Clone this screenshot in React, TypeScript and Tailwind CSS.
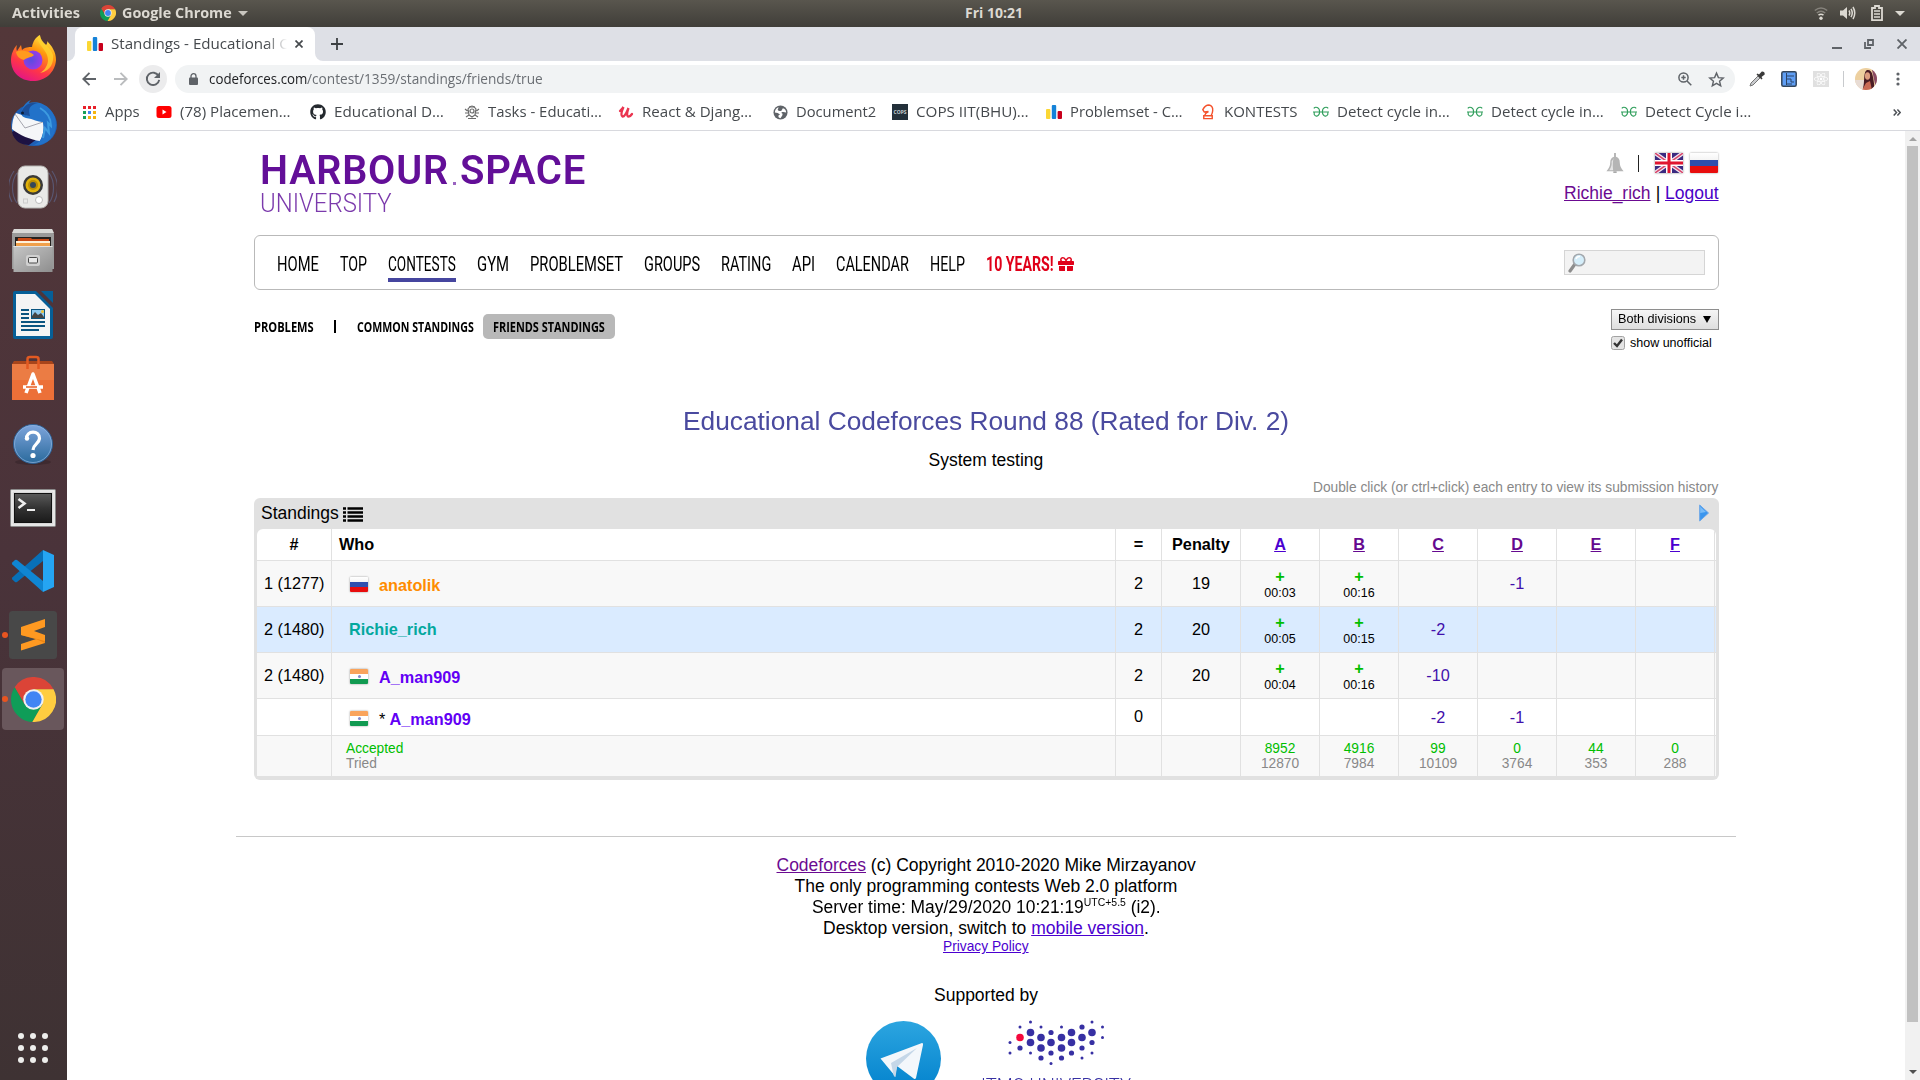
import React, { useLayoutEffect, useRef } from "react";
import { FaGithub, FaGift, FaReact } from "react-icons/fa";

/* Single line of text stretched horizontally to fill the width of its box. */
function Fit({ className = "", children }: { className?: string; children: React.ReactNode }) {
  const outer = useRef<HTMLSpanElement>(null);
  const inner = useRef<HTMLSpanElement>(null);
  useLayoutEffect(() => {
    if (!outer.current || !inner.current) return;
    const k = outer.current.clientWidth / inner.current.offsetWidth;
    inner.current.style.transform = `scaleX(${k})`;
  }, []);
  return (
    <span ref={outer} className={`block shrink-0 whitespace-nowrap text-left ${className}`}>
      <span ref={inner} className="inline-block origin-left align-top">
        {children}
      </span>
    </span>
  );
}

/* ---------- Icons ---------- */

function ChromeIcon({ className }: { className: string }) {
  return (
    <svg viewBox="2 2 44 44" className={className}>
      <path d="M5.54 12.03A22 22 0 0 1 43.6 14H24L15.34 29Z" fill="#db4437" />
      <path d="M22.86 45.97A22 22 0 0 1 5.54 12.03L15.34 29L32.66 29Z" fill="#0f9d58" />
      <path d="M43.6 14A22 22 0 0 1 22.86 45.97L32.66 29L24 14Z" fill="#ffcd40" />
      <circle cx="24" cy="24" r="10" fill="#f1f1f1" />
      <circle cx="24" cy="24" r="8" fill="#4285f4" />
    </svg>
  );
}

function Bars() {
  return (
    <svg viewBox="0 0 16 14" className="h-3.5 w-4">
      <rect x="0" y="4" width="4.4" height="10" rx="1" fill="#fbd734" />
      <rect x="5.8" y="0" width="4.4" height="14" rx="1" fill="#1582d8" />
      <rect x="11.6" y="6" width="4.4" height="8" rx="1" fill="#c8001c" />
    </svg>
  );
}

function Gfg() {
  return (
    <svg viewBox="0 0 16 12" className="h-3 w-4" fill="none" stroke="#2f9e5b" strokeWidth="1.1">
      <path d="M.8 2.4C2.3.3 6.6.9 6.6 5.8S2.4 11 1.2 8.6V6.3M0 6H16" />
      <path d="M15.2 2.4C13.7.3 9.4.9 9.4 5.8S13.6 11 14.8 8.6V6.3" />
    </svg>
  );
}

function Firefox() {
  return (
    <svg viewBox="0 0 48 48" className="size-12">
      <defs>
        <linearGradient id="ffA" x1=".8" y1="0" x2=".3" y2="1">
          <stop offset="0" stopColor="#fff44f" />
          <stop offset=".35" stopColor="#ff980e" />
          <stop offset=".7" stopColor="#ff3647" />
          <stop offset="1" stopColor="#e31587" />
        </linearGradient>
        <radialGradient id="ffB" cx=".4" cy=".5" r=".7">
          <stop offset="0" stopColor="#5a4be0" />
          <stop offset="1" stopColor="#a838e8" />
        </radialGradient>
      </defs>
      <path d="M8 10C7 13 7.500 15 8 16L12 10L13 15C16 12 20 12 23 12C24 6 27 2 31 0C31 4 33 7 37 10C39 8 38 6 38 6C43 11 47 17 47 25C46 38 36 46 24 46C11 46 2 37 2 25C2 20 4 14 8 10Z" fill="url(#ffA)" />
      <path d="M29 1C27 10 40 15 39 26C38 33 34 36 31 38C42 36 45 27 44 20C42 12 33 9 31 1Z" fill="#ffd22e" opacity=".8" />
      <circle cx="24" cy="25" r="9.500" fill="url(#ffB)" />
      <path d="M7 17C12 14 18 16 23 18.500L25 20C22 23 18 22 15 25C11 24 8 22 7 17Z" fill="#ff9a1e" />
    </svg>
  );
}

function Thunderbird() {
  return (
    <svg viewBox="0 0 48 48" className="size-12">
      <ellipse cx="25" cy="26" rx="23" ry="21" fill="#1f5fb4" />
      <path d="M3 33C5 42 12 46 20 46L28 40L8 30Z" fill="#1d1242" />
      <path d="M7 14L34 23C36 30 33 38 31 42C22 41 10 36 3 30C3 24 4 18 7 14Z" fill="#f5f6f8" />
      <path d="M6 15L16 29L34 23" fill="none" stroke="#a5a5ae" strokeWidth="1" />
      <path d="M12 15C13 6 19 2 22 1C20 3 20 4 20 4C34 0 48 12 47 27C46 38 38 47 25 46C34 42 36 33 34 23C28 23 25 20 17 19C14 18 13 17 12 15Z" fill="#2272c9" />
      <path d="M12 14C15 6 20 3 29 4C20 6 19 10 21 17C17 16 15 17 12 14Z" fill="#1c4f99" />
      <path d="M31 9C38 13 42 20 42 27L39 24L40 34L36 29L34 39" fill="none" stroke="#3d9be0" strokeWidth="2" />
      <circle cx="13.500" cy="14" r="1.500" fill="#0c1e3a" />
    </svg>
  );
}

function Rhythmbox() {
  return (
    <svg viewBox="0 0 48 48" className="size-12">
      <g fill="none" stroke="#5c6488" strokeWidth="1.200" opacity=".7">
        <path d="M8 10C2 18 2 32 8 40M5 8C-2 18-2 30 3 39M40 10C46 18 46 32 40 40M43 8C50 18 50 30 45 39" />
      </g>
      <rect x="9" y="3" width="30" height="42" rx="7" fill="#e9e9e7" stroke="#b5b5b2" />
      <circle cx="24" cy="22" r="10" fill="#3a3a38" />
      <circle cx="24" cy="22" r="7.500" fill="#e0b10a" />
      <circle cx="24" cy="22" r="5" fill="#b98d05" />
      <circle cx="24" cy="22" r="3" fill="#33475a" />
      <circle cx="30" cy="37" r="3.500" fill="#fff" stroke="#bbb" />
      <rect x="14.500" y="36" width="4" height="4" fill="none" stroke="#ccc" />
    </svg>
  );
}

function Files() {
  return (
    <svg viewBox="0 0 48 48" className="size-12">
      <defs>
        <linearGradient id="flA" x1="0" y1="0" x2="1" y2="1">
          <stop offset="0" stopColor="#c6c6c6" />
          <stop offset="1" stopColor="#8e8e8e" />
        </linearGradient>
      </defs>
      <path d="M5 2H43L45 7V42H3V7Z" fill="#9a9a9a" />
      <path d="M5 2H43L45 6H3Z" fill="#d9d9d7" />
      <rect x="6" y="10" width="36" height="12" fill="#24211f" />
      <path d="M9 11H22L23 12H40V20H8Z" fill="#c94a16" />
      <rect x="7" y="14" width="34" height="2" fill="#fff1da" />
      <rect x="7" y="16" width="34" height="4" fill="#f0a04b" />
      <rect x="4.500" y="19" width="39" height="26" fill="url(#flA)" />
      <path d="M4.500 19.500H43.500" stroke="#e2e2e2" />
      <rect x="17" y="28" width="14" height="11" rx="2" fill="#d0d0d0" />
      <rect x="19.500" y="30.500" width="9" height="5.500" rx="1" fill="#e8e8e8" stroke="#4a4a4a" />
    </svg>
  );
}

function Writer() {
  return (
    <svg viewBox="0 0 48 48" className="size-12">
      <path d="M6 0H27L44 17V46Q44 48 42 48H6Q4 48 4 46V2Q4 0 6 0Z" fill="#065f97" />
      <path d="M32 0H44V12Z" fill="#065f97" />
      <path d="M7 3H26L41 18V45H7Z" fill="#f4f4f4" />
      <path d="M12 19H20M12 23H20M12 27H20M12 31H36M12 35H36M12 39H30" stroke="#0a5480" strokeWidth="2" />
      <rect x="22.500" y="18.500" width="13" height="9" fill="#8ec9f0" stroke="#0a5480" />
      <path d="M23 27V25L26 21L29 24L32 22L35 26V27Z" fill="#444" />
      <circle cx="33.500" cy="20.500" r="1.500" fill="#f2c230" />
    </svg>
  );
}

function Software() {
  return (
    <svg viewBox="0 0 48 48" className="size-12">
      <path d="M3 9L5 6H43L45 9V16H3Z" fill="#a7451b" />
      <rect x="3" y="9" width="42" height="36" fill="#ec7038" />
      <rect x="3" y="9" width="42" height="16" fill="#ea8750" opacity=".5" />
      <path d="M18.500 14V4Q18.500 2 21 2H27Q29.500 2 29.500 4V14" fill="none" stroke="#e25a22" strokeWidth="2.500" />
      <path d="M17 38L24 19L31 38M14 32H34" fill="none" stroke="#fff" strokeWidth="3.500" strokeLinejoin="round" />
      <path d="M17 32H28" stroke="#e95b1e" strokeWidth="1.500" />
    </svg>
  );
}

function Help() {
  return (
    <svg viewBox="0 0 48 48" className="size-12">
      <defs>
        <linearGradient id="hpA" x1="0" y1="0" x2="0" y2="1">
          <stop offset="0" stopColor="#7ea5dc" />
          <stop offset="1" stopColor="#2a6a9c" />
        </linearGradient>
      </defs>
      <ellipse cx="24" cy="43" rx="18" ry="3" fill="#352529" opacity=".6" />
      <circle cx="24" cy="25" r="19.500" fill="url(#hpA)" stroke="#2e5f92" />
      <circle cx="24" cy="25" r="18.500" fill="none" stroke="#8fb4e0" opacity=".7" />
      <path d="M17.500 20C17 11 31 11 30.500 19.500C30 25 24.500 25 24 31" fill="none" stroke="#fff" strokeWidth="3.200" />
      <circle cx="18" cy="19.500" r="2.200" fill="#fff" />
      <circle cx="24" cy="36.500" r="2.600" fill="#fff" />
    </svg>
  );
}

function Terminal() {
  return (
    <svg viewBox="0 0 48 48" className="size-12">
      <defs>
        <linearGradient id="tmA" x1="0" y1="0" x2="0" y2="1">
          <stop offset="0" stopColor="#5a5a5a" />
          <stop offset=".5" stopColor="#333" />
          <stop offset="1" stopColor="#1a1a1a" />
        </linearGradient>
      </defs>
      <rect x="1.500" y="6.500" width="45" height="37" rx="1" fill="#d8d8d8" stroke="#8a8a8a" />
      <rect x="3" y="8" width="42" height="34" fill="none" stroke="#f4f4f4" />
      <rect x="5.500" y="10.500" width="37" height="29" fill="url(#tmA)" stroke="#111" />
      <path d="M9.500 16L15.500 20.500L9.500 25" fill="none" stroke="#eee" strokeWidth="2.600" />
      <path d="M18 27H26" stroke="#eee" strokeWidth="2" />
    </svg>
  );
}

function VsCode() {
  return (
    <svg viewBox="0 0 48 48" className="size-12">
      <path d="M34 3V14L8 35Q7 35.500 6 35L3.300 32.500Q2.500 31.500 3.300 30.500Z" fill="#0870b8" />
      <path d="M34 45V34L8 13Q7 12.500 6 13L3.300 15.500Q2.500 16.500 3.300 17.500Z" fill="#0f86d3" />
      <path d="M34 3L45 8V40L34 45Z" fill="#25a5f3" />
    </svg>
  );
}

function Sublime() {
  return (
    <svg viewBox="0 0 48 48" className="size-12">
      <rect width="48" height="48" rx="3.500" fill="#484848" />
      <path d="M12 33L36 25V32L12 39.500Z" fill="#ff9921" />
      <path d="M12 24L20 21L36 26V32L28 28.500L12 24Z" fill="#ea8413" />
      <path d="M12 16L36 8V16L25 20L36 24V30L12 24Z" fill="#ff9921" />
    </svg>
  );
}

function Magnifier() {
  return (
    <svg viewBox="0 0 18 20" className="h-5 w-[18px]">
      <path d="M2 18L7 11" stroke="#8d8d8d" strokeWidth="3.200" strokeLinecap="round" />
      <circle cx="11" cy="7" r="5.800" fill="#d5eefa" stroke="#a3a8ad" strokeWidth="1.600" />
      <path d="M8 6Q9 3 12 3.500" stroke="#fff" strokeWidth="1.500" fill="none" />
    </svg>
  );
}

function RuFlag({ className }: { className: string }) {
  return (
    <span className={`flex flex-col overflow-hidden rounded-[1px] shadow-[0_0_2px_rgba(0,0,0,.45)] ${className}`}>
      <span className="flex-1 bg-gradient-to-b from-white to-[#f4f4f4]" />
      <span className="flex-1 bg-[#2f4fae]" />
      <span className="flex-1 bg-[#e80d0d]" />
    </span>
  );
}

function InFlag() {
  return (
    <span className="-mt-0.5 flex h-[15px] w-[18px] flex-col overflow-hidden rounded-[1px] shadow-[0_0_2px_rgba(0,0,0,.45)]">
      <span className="flex-1 bg-[#f9a45c]" />
      <span className="flex flex-1 items-center justify-center bg-white">
        <span className="size-[3px] rounded-full bg-[#8288c8]" />
      </span>
      <span className="flex-1 bg-[#119a51]" />
    </span>
  );
}

function UkFlag() {
  return (
    <svg viewBox="0 0 28 20" className="h-5 w-7 shadow-[0_0_2px_rgba(0,0,0,.45)]">
      <rect width="28" height="20" fill="#3b2a80" />
      <path d="M0 0L28 20M28 0L0 20" stroke="#f3e9f2" strokeWidth="4" />
      <path d="M0 0L28 20M28 0L0 20" stroke="#d8486c" strokeWidth="1.500" />
      <path d="M14 0V20M0 10H28" stroke="#fff" strokeWidth="6" />
      <path d="M14 0V20M0 10H28" stroke="#e0152f" strokeWidth="3" />
    </svg>
  );
}

/* ---------- Desktop shell ---------- */

function TopBar() {
  return (
    <div className="flex h-[27px] shrink-0 items-center bg-gradient-to-b from-[#59564e] to-[#403e39] pb-px font-['Open_Sans',sans-serif] text-sm font-bold text-[#dcd9d2]">
      <Fit className="ml-3 w-[68px]">Activities</Fit>
      <ChromeIcon className="ml-5 size-4" />
      <Fit className="ml-1.5 w-[110px]">Google Chrome</Fit>
      <svg viewBox="0 0 10 5" className="ml-1.5 h-[5px] w-2.5">
        <path d="M0 0H10L5 5Z" fill="#c9c6bf" />
      </svg>
      <Fit className="ml-[717px] w-[58px]">Fri 10:21</Fit>
      <div className="ml-auto flex items-center pr-[15px]">
        <svg viewBox="0 0 14 13" className="mr-3 h-[13px] w-3.5" fill="none" strokeWidth="1.600">
          <path d="M.8 3.500Q7-1.500 13.200 3.500M2.800 6Q7 2.500 11.200 6" stroke="#86837c" />
          <path d="M4.500 8.200Q7 6.300 9.500 8.200" stroke="#dcd9d2" />
          <circle cx="7" cy="11.300" r="1.700" fill="#dcd9d2" />
        </svg>
        <svg viewBox="0 0 16 14" className="mr-[15px] h-3.5 w-4" fill="none" stroke="#dcd9d2" strokeWidth="1.500">
          <path d="M0 4.500H3L7 1V13L3 9.500H0Z" fill="#dcd9d2" stroke="none" />
          <path d="M9 4.500Q10.500 7 9 9.500M11 2.800Q13.500 7 11 11.200M13 1Q16.500 7 13 13" />
        </svg>
        <svg viewBox="0 0 12 16" className="mr-3 h-4 w-3">
          <path d="M4 1H8V3H11V15.200H1V3H4Z" fill="none" stroke="#dcd9d2" strokeWidth="1.800" />
          <path d="M3 6H9M3 9H9M3 12H9" stroke="#dcd9d2" strokeWidth="1.600" />
        </svg>
        <svg viewBox="0 0 10 5" className="h-[5px] w-2.5">
          <path d="M0 0H10L5 5Z" fill="#dcd9d2" />
        </svg>
      </div>
    </div>
  );
}

function Dock() {
  const icons = [<Firefox />, <Thunderbird />, <Rhythmbox />, <Files />, <Writer />, <Software />, <Help />, <Terminal />, <VsCode />];
  return (
    <div className="flex w-[67px] shrink-0 flex-col bg-gradient-to-b from-[#533739] via-[#4a333a] to-[#3e3233]">
      {icons.map((icon, i) => (
        <div key={i} className="flex h-16 w-[66px] items-center justify-center">
          {icon}
        </div>
      ))}
      <div className="flex h-16 items-center">
        <span className="ml-0.5 size-1.5 rounded-full bg-[#e95420]" />
        <span className="ml-px">
          <Sublime />
        </span>
      </div>
      <div className="ml-0.5 mt-px flex h-[62px] w-[62px] items-center rounded bg-[#69575c]">
        <span className="size-1.5 rounded-full bg-[#e95420]" />
        <ChromeIcon className="ml-[3px] size-[45px]" />
      </div>
      <div className="mb-[17px] ml-[18px] mt-auto grid w-[30px] grid-cols-3 gap-1.5">
        {Array.from({ length: 9 }, (_, i) => (
          <span key={i} className="size-1.5 rounded-full bg-[#eeeeec]" />
        ))}
      </div>
    </div>
  );
}

/* ---------- Browser chrome ---------- */

function TabStrip() {
  return (
    <div className="flex h-[34px] items-center bg-[#dee0e6]">
      <div className="flex w-2 items-end self-stretch bg-white">
        <span className="h-full w-2 rounded-br-lg bg-[#dee0e6]" />
      </div>
      <div className="flex h-full w-60 items-center rounded-t-lg bg-white pl-3">
        <Bars />
        <div className="ml-2 w-[176px] overflow-hidden [mask-image:linear-gradient(to_right,black_88%,transparent)]">
          <Fit className="w-[187px]">Standings - Educational Co</Fit>
        </div>
        <svg viewBox="0 0 8 8" className="ml-2 size-2" stroke="#45494d" strokeWidth="1.700">
          <path d="M.5.5L7.500 7.500M7.500.5L.5 7.500" />
        </svg>
      </div>
      <div className="flex w-2 self-stretch bg-white">
        <span className="h-full w-2 rounded-bl-lg bg-[#dee0e6]" />
      </div>
      <svg viewBox="0 0 12 12" className="ml-2 size-3" stroke="#3c4043" strokeWidth="1.800">
        <path d="M6 0V12M0 6H12" />
      </svg>
      <div className="ml-auto flex items-center pr-[13px]">
        <span className="mr-[22px] mt-2 h-0.5 w-2.5 bg-[#5f6368]" />
        <svg viewBox="0 0 10 10" className="mr-[23px] size-2.5" fill="none" stroke="#5f6368" strokeWidth="1.800">
          <path d="M4 1H9V6H4ZM1 3V9H7" />
        </svg>
        <svg viewBox="0 0 10 10" className="size-2.5" stroke="#5f6368" strokeWidth="1.900">
          <path d="M.5.5L9.500 9.500M9.500.5L.5 9.500" />
        </svg>
      </div>
    </div>
  );
}

function Toolbar() {
  return (
    <div className="flex h-9 items-center bg-white">
      <svg viewBox="0 0 14 14" className="ml-[15px] size-3.5" fill="none" stroke="#5f6368" strokeWidth="1.900">
        <path d="M14 7H1.500M7.500 .8L1.300 7L7.500 13.200" />
      </svg>
      <svg viewBox="0 0 14 14" className="ml-[18px] size-3.5" fill="none" stroke="#babcbe" strokeWidth="1.900">
        <path d="M0 7H12.500M6.500 .8L12.700 7L6.500 13.200" />
      </svg>
      <span className="ml-[11px] flex size-7 items-center justify-center rounded-full bg-[#ececed]">
        <svg viewBox="0 0 16 16" className="size-4" fill="none" stroke="#5f6368" strokeWidth="1.900">
          <path d="M13.600 5A6.200 6.200 0 1 0 14.200 8.800" />
          <path d="M15 1V7H9Z" fill="#5f6368" stroke="none" />
        </svg>
      </span>
      <div className="ml-2 flex h-7 w-[1560px] items-center rounded-full bg-[#f1f3f4] pl-[14px] pr-[10px]">
        <svg viewBox="0 0 9 12" className="h-3 w-[9px]">
          <rect x="0" y="4.500" width="9" height="7.500" rx="1" fill="#5f6368" />
          <path d="M2 5V3.200A2.500 2.500 0 0 1 7 3.200V5" fill="none" stroke="#5f6368" strokeWidth="1.300" />
        </svg>
        <Fit className="ml-[11px] w-[98px] text-[#202124]">codeforces.com</Fit>
        <Fit className="w-[236px] text-[#6a6e73]">/contest/1359/standings/friends/true</Fit>
        <svg viewBox="0 0 14 14" className="ml-auto size-3.5" fill="none" stroke="#5f6368" strokeWidth="1.500">
          <circle cx="5.500" cy="5.500" r="4.600" />
          <path d="M9 9L13.300 13.300M3.300 5.500H7.700M5.500 3.300V7.700" />
        </svg>
        <svg viewBox="0 0 24 24" className="ml-[16px] size-[17px]" fill="none" stroke="#5f6368" strokeWidth="2">
          <path d="M12 3L14.700 9.300L21.500 9.900L16.300 14.400L17.900 21L12 17.500L6.100 21L7.700 14.400L2.500 9.900L9.300 9.300Z" />
        </svg>
      </div>
      <svg viewBox="0 0 16 16" className="ml-[14px] size-4">
        <path d="M1 15L2 12L9 5L11 7L4 14Z" fill="#c9cbce" stroke="#777" />
        <path d="M7.500 3.500L12.500 8.500L13.500 7.500L12.500 6L15.700 3.500Q16 .3 12.800 .5L10 3.500L8.500 2.500Z" fill="#3a3a3a" />
      </svg>
      <svg viewBox="0 0 16 16" className="ml-[16px] size-4">
        <rect x=".8" y=".8" width="14.400" height="14.400" rx="1.500" fill="#5f9ef4" stroke="#33465c" strokeWidth="1.500" />
        <path d="M5.500 2V14M5.500 5H13M5.500 8H10V11H13M5.500 13H11" fill="none" stroke="#2c4568" strokeWidth="1" />
      </svg>
      <span className="ml-4 flex size-4 items-center justify-center bg-[#e0e0e0] text-white">
        <FaReact className="size-3.5" />
      </span>
      <span className="ml-3.5 h-4 w-px bg-[#c8cacd]" />
      <svg viewBox="0 0 22 22" className="ml-[11px] size-[22px]">
        <defs>
          <clipPath id="av">
            <circle cx="11" cy="11" r="11" />
          </clipPath>
        </defs>
        <g clipPath="url(#av)">
          <rect width="22" height="22" fill="#edd0a0" />
          <rect y="12" width="9" height="10" fill="#e8dcd5" />
          <path d="M8 20C10 14 8 4 12 2C18 1 18 9 20 22Z" fill="#4a1c25" />
          <ellipse cx="12.500" cy="8" rx="2.600" ry="3.800" fill="#dd9d80" />
          <path d="M7 22L11 15L15 13L17 22Z" fill="#c96a55" />
          <path d="M17 2L22 0V22L20 16Z" fill="#8b4a65" />
        </g>
      </svg>
      <svg viewBox="0 0 4 14" className="ml-[19px] h-3.5 w-1" fill="#5f6368">
        <circle cx="2" cy="2" r="1.600" />
        <circle cx="2" cy="7" r="1.600" />
        <circle cx="2" cy="12" r="1.600" />
      </svg>
    </div>
  );
}

function Bookmark({ icon, label, item, text }: { icon: React.ReactNode; label: string; item: string; text: string }) {
  return (
    <div className={`flex shrink-0 items-center gap-2 ${item}`}>
      <span className="flex size-4 shrink-0 items-center justify-center">{icon}</span>
      <Fit className={text}>{label}</Fit>
    </div>
  );
}

function Bookmarks() {
  const dots = ["bg-[#e8202a]", "bg-[#e8202a]", "bg-[#e8202a]", "bg-[#18a05a]", "bg-[#4285f4]", "bg-[#f5b50f]", "bg-[#18a05a]", "bg-[#f5b50f]", "bg-[#f5b50f]"];
  return (
    <div className="flex h-[34px] items-start border-b border-[#d8d9de] bg-white pl-3.5">
      <div className="flex h-[30px] items-center">
        <Bookmark
          item="w-[75px]"
          text="w-[35px]"
          label="Apps"
          icon={
            <span className="grid grid-cols-3 gap-0.5">
              {dots.map((c, i) => (
                <span key={i} className={`size-[3px] ${c}`} />
              ))}
            </span>
          }
        />
        <Bookmark
          item="w-[154px]"
          text="w-[111px]"
          label="(78) Placemen…"
          icon={
            <svg viewBox="0 0 16 12" className="h-3 w-4">
              <rect x=".5" width="15" height="12" rx="2.500" fill="#f00" />
              <path d="M6.500 3.500L10.500 6L6.500 8.500Z" fill="#fff" />
            </svg>
          }
        />
        <Bookmark item="w-[154px]" text="w-[110px]" label="Educational D…" icon={<FaGithub className="size-4 text-[#24292e]" />} />
        <Bookmark
          item="w-[154px]"
          text="w-[114px]"
          label="Tasks - Educati…"
          icon={
            <svg viewBox="0 0 16 16" className="size-4" fill="none" stroke="#6b6b6b" strokeWidth="1.200">
              <path d="M4 5Q8-1 12 5L11 11L8 13L5 11ZM1 5L3.500 7M15 5L12.500 7M1 9L4 9M15 9H12M2 13L5 11M14 13L11 11" />
              <circle cx="8" cy="7" r="2" />
              <path d="M4 14.500H12M5 3L11 3" />
            </svg>
          }
        />
        <Bookmark
          item="w-[154px]"
          text="w-[110px]"
          label="React &amp; Djang…"
          icon={
            <svg viewBox="0 0 16 14" className="h-3.5 w-4" fill="none" stroke="#ea3550" strokeWidth="2.300" strokeLinecap="round">
              <path d="M2 6Q5 3 5.500 2Q2 10 4.500 11.500Q7 12 10.500 3Q8 10 10 11.500Q12 12 14 9" />
            </svg>
          }
        />
        <Bookmark
          item="w-[120px]"
          text="w-[80px]"
          label="Document2"
          icon={
            <svg viewBox="0 0 16 16" className="size-[15px]">
              <circle cx="8" cy="8" r="7.500" fill="#5f6368" />
              <path d="M2 8Q2 4 6 2.500L5 5Q6 7 9 6L10.500 3.500Q14 4.500 14 8L11 7.500Q9 7 9 8.500Q11 9 10 11L8 14Q5 13.500 6 11L7.500 10L5 8.500Z" fill="#fff" />
            </svg>
          }
        />
        <Bookmark
          item="w-[153.500px]"
          text="w-[113px]"
          label="COPS IIT(BHU)…"
          icon={<span className="flex size-4 items-center justify-center bg-[#23303a] text-[5px] font-bold text-[#c4ccd0]">COPS</span>}
        />
        <Bookmark item="w-[154px]" text="w-[113px]" label="Problemset - C…" icon={<Bars />} />
        <Bookmark
          item="w-[113px]"
          text="w-[74px]"
          label="KONTESTS"
          icon={
            <svg viewBox="0 0 14 17" className="h-4 w-3.5" fill="none" stroke="#f4522c" strokeWidth="1.500">
              <path d="M3.500 12Q4 9.500 7.500 8L3 8.500L1.500 6Q4 1 8 1Q12.500 2 12 7Q11.800 9.500 10.500 12M2.500 12.500H11.500V15.500H2.500Z" />
            </svg>
          }
        />
        <Bookmark item="w-[154px]" text="w-[113px]" label="Detect cycle in…" icon={<Gfg />} />
        <Bookmark item="w-[154px]" text="w-[113px]" label="Detect cycle in…" icon={<Gfg />} />
        <Bookmark item="w-[272.500px]" text="w-[106px]" label="Detect Cycle i…" icon={<Gfg />} />
        <svg viewBox="0 0 8 7" className="h-[7px] w-2" fill="none" stroke="#4d5156" strokeWidth="1.500">
          <path d="M.7.5L3.500 3.500L.7 6.500M4.400.5L7.200 3.500L4.400 6.500" />
        </svg>
      </div>
    </div>
  );
}

/* ---------- Page ---------- */

function Header() {
  return (
    <div className="flex h-[104px] justify-between">
      <div className="pl-1.5 pt-[19px] font-['Roboto',sans-serif] text-[#630f98]">
        <div className="flex text-[41px] font-semibold leading-[41px] tracking-[0.02em]">
          <Fit className="w-[189px]">HARBOUR</Fit>
          <span className="ml-1 mr-1 mt-[32px] size-[3px] self-start bg-[#9a63c0]" />
          <Fit className="w-[126px]">SPACE</Fit>
        </div>
        <div className="text-[25px] font-light leading-[25px] text-[#7b3aac]">
          <Fit className="w-[132px]">UNIVERSITY</Fit>
        </div>
      </div>
      <div className="flex flex-col items-end pt-[22px] text-[17.5px] leading-[21px]">
        <div className="flex h-5 items-center">
          <svg viewBox="0 0 20 22" className="mt-px h-[21px] w-5">
            <path d="M9 0H11V4Q15 5 15 10Q15 15 19 19H1Q5 15 5 10Q5 5 9 4Z" fill="#b5b5b5" />
            <path d="M9 5Q7 8 8 18H4Q7 14 6.500 9Z" fill="#e6e6e6" />
            <rect x="8" y="19" width="4" height="2" rx="1" fill="#aaa" />
          </svg>
          <span className="ml-[13px] h-[17px] w-[1.5px] bg-[#222]" />
          <span className="ml-4">
            <UkFlag />
          </span>
          <RuFlag className="ml-[7px] mr-px h-5 w-7" />
        </div>
        <div className="mt-2.5 flex">
          <Fit className="w-[87px] text-[#6b0a91]">
            <span className="underline">Richie_rich</span>
          </Fit>
          <span className="w-3.5 text-center">|</span>
          <Fit className="w-[54px] text-[#4900c6]">
            <span className="underline">Logout</span>
          </Fit>
        </div>
      </div>
    </div>
  );
}

function Nav() {
  const items = [
    ["HOME", "w-[42px]"],
    ["TOP", "w-[27px]"],
    ["CONTESTS", "w-[68px]"],
    ["GYM", "w-[32px]"],
    ["PROBLEMSET", "w-[93px]"],
    ["GROUPS", "w-[56px]"],
    ["RATING", "w-[50px]"],
    ["API", "w-[23px]"],
    ["CALENDAR", "w-[73px]"],
    ["HELP", "w-[35px]"],
  ];
  return (
    <div className="flex h-[55px] items-center justify-between rounded-md border border-[#b9b9b9] pl-[22px] pr-[13px]">
      <div className="flex gap-[21px] pt-px font-['Roboto',sans-serif] text-xl leading-7">
        {items.map(([label, w]) => (
          <div key={label} className={label === "CONTESTS" ? "mt-[5px] border-b-4 border-[#46469f]" : "mt-[5px] border-b-4 border-transparent"}>
            <Fit className={w}>{label}</Fit>
          </div>
        ))}
        <div className="mt-[5px] flex gap-1 text-[#e00019]">
          <Fit className="w-[68px] font-bold">10 YEARS!</Fit>
          <FaGift className="mt-1.5 size-4" />
        </div>
      </div>
      <div className="flex h-[25px] w-[141px] items-center border border-[#d5d5d5] bg-[#f3f3f3] pl-[3px]">
        <Magnifier />
      </div>
    </div>
  );
}

function SubNav() {
  return (
    <div className="flex h-[115px] items-start justify-between">
      <div className="flex pt-6 font-['Open_Sans',sans-serif] text-[15px] font-bold leading-[25px]">
        <Fit className="w-[60px]">PROBLEMS</Fit>
        <span className="ml-5 mt-1.5 h-[13px] w-[1.5px] bg-black" />
        <Fit className="ml-[21px] w-[117px]">COMMON STANDINGS</Fit>
        <div className="ml-[9px] rounded-[5px] bg-[#b8b8b8] px-2.5">
          <Fit className="w-[112px]">FRIENDS STANDINGS</Fit>
        </div>
      </div>
      <div className="w-[108px] pt-[19px] text-[12.5px]">
        <div className="flex h-[21px] items-center border border-[#8e8e8e] bg-gradient-to-b from-[#f6f6f6] to-[#dedede] pl-1.5">
          <Fit className="w-[78px]">Both divisions</Fit>
          <svg viewBox="0 0 8 7" className="ml-[7px] h-[7px] w-2">
            <path d="M0 0H8L4 7Z" />
          </svg>
        </div>
        <div className="mt-1.5 flex h-3.5 items-center">
          <svg viewBox="0 0 14 14" className="size-3.5">
            <rect x=".5" y=".5" width="13" height="13" rx="2" fill="#e4e4e4" stroke="#a2a2a2" />
            <path d="M3 7L6 10L11 3.500" fill="none" stroke="#333" strokeWidth="2.400" />
          </svg>
          <Fit className="ml-[5px] w-[82px]">show unofficial</Fit>
        </div>
      </div>
    </div>
  );
}

const GRID = "grid grid-cols-[75px_784px_46px_79px_79px_79px_79px_79px_79px_79px]";

function Cell({ children, className = "" }: { children?: React.ReactNode; className?: string }) {
  return <div className={`flex items-center justify-center border-r border-[#e1e1e1] ${className}`}>{children}</div>;
}

function Row({ rank, who, solved, penalty, results, className }: { rank?: string; who: React.ReactNode; solved: string; penalty?: string; results: string[]; className: string }) {
  return (
    <div className={`${GRID} border-b border-[#e1e1e1] ${className}`}>
      <Cell className="pl-px">{rank && <Fit className="w-[61px]">{rank}</Fit>}</Cell>
      <div className="flex items-center border-r border-[#e1e1e1] pl-[18px] font-bold">{who}</div>
      <Cell className={rank ? "" : "pb-0.5"}>{solved}</Cell>
      <Cell>{penalty}</Cell>
      {results.map((r, i) => (
        <Cell key={i}>
          {r.includes(":") ? (
            <div className="text-center">
              <div className="font-bold leading-[18px] text-[#00be00]">+</div>
              <div className="mt-px text-[12.5px] leading-[15px]">{r}</div>
            </div>
          ) : (
            <span className="text-[#4110ab]">{r}</span>
          )}
        </Cell>
      ))}
    </div>
  );
}

function Standings() {
  const problems = [
    ["A", "text-[#4b00d0]", "8952", "12870"],
    ["B", "text-[#65098f]", "4916", "7984"],
    ["C", "text-[#65098f]", "99", "10109"],
    ["D", "text-[#65098f]", "0", "3764"],
    ["E", "text-[#65098f]", "44", "353"],
    ["F", "text-[#4b00d0]", "0", "288"],
  ];
  return (
    <div className="mt-0.5 h-[282px] rounded-md bg-[#e1e1e1] px-[3px] text-[16.25px]">
      <div className="flex h-[31px] items-center pl-1 text-[17.5px]">
        <Fit className="w-[78px]">Standings</Fit>
        <svg viewBox="0 0 20 15" className="ml-1 mt-0.5 h-[15px] w-5">
          <path d="M0 1.500H3M0 5.500H3M0 9.500H3M0 13.500H3M4.500 1.500H20M4.500 5.500H20M4.500 9.500H20M4.500 13.500H20" stroke="#000" strokeWidth="2.500" />
        </svg>
        <svg viewBox="0 0 10 18" className="mb-px ml-auto mr-[7px] h-[18px] w-2.5">
          <path d="M.7 1L9.500 9L.7 17Z" fill="#3b96ee" stroke="#6aa5e8" />
          <path d="M1.200 2.500L7 8L1.200 9Z" fill="#79bcf8" />
        </svg>
      </div>
      <div className="overflow-hidden rounded-t-md">
        <div className={`${GRID} h-8 border-b border-[#e1e1e1] bg-white font-bold`}>
          <Cell>#</Cell>
          <div className="flex items-center border-r border-[#e1e1e1] pl-[7px]">
            <Fit className="w-[35px]">Who</Fit>
          </div>
          <Cell>=</Cell>
          <Cell>
            <Fit className="w-[58px]">Penalty</Fit>
          </Cell>
          {problems.map(([p, color]) => (
            <Cell key={p}>
              <span className={`underline ${color}`}>{p}</span>
            </Cell>
          ))}
        </div>
        <Row
          className="h-[46px] bg-[#f8f8f8]"
          rank="1 (1277)"
          solved="2"
          penalty="19"
          results={["00:03", "00:16", "", "-1", "", ""]}
          who={
            <div className="flex items-center gap-[11px] pt-1 text-[#ff8c00]">
              <RuFlag className="-mt-0.5 h-[15px] w-[18px]" />
              <Fit className="w-[61px]">anatolik</Fit>
            </div>
          }
        />
        <Row
          className="h-[46px] bg-[#daebff]"
          rank="2 (1480)"
          solved="2"
          penalty="20"
          results={["00:05", "00:15", "-2", "", "", ""]}
          who={<Fit className="-ml-px w-[88px] text-[#03a89e]">Richie_rich</Fit>}
        />
        <Row
          className="h-[46px] bg-[#f8f8f8]"
          rank="2 (1480)"
          solved="2"
          penalty="20"
          results={["00:04", "00:16", "-10", "", "", ""]}
          who={
            <div className="flex items-center gap-[11px] pt-1 text-[#6200f5]">
              <InFlag />
              <Fit className="w-[81px]">A_man909</Fit>
            </div>
          }
        />
        <Row
          className="h-[37px] bg-white"
          solved="0"
          results={["", "", "-2", "-1", "", ""]}
          who={
            <div className="flex items-center gap-[11px] pt-[5px] text-[#6200f5]">
              <InFlag />
              <div className="flex">
                <span className="w-[10.500px] font-normal text-black">*</span>
                <Fit className="w-[81px]">A_man909</Fit>
              </div>
            </div>
          }
        />
        <div className={`${GRID} h-10 bg-[#f8f8f8] text-[13.75px] leading-[15px] text-[#888]`}>
          <Cell />
          <div className="flex flex-col justify-center border-r border-[#e1e1e1] pl-3.5">
            <Fit className="w-[57px] text-[#00be00]">Accepted</Fit>
            <Fit className="w-[31px]">Tried</Fit>
          </div>
          <Cell />
          <Cell />
          {problems.map(([p, , ok, tried]) => (
            <Cell key={p} className="flex-col">
              <span className="text-[#00be00]">{ok}</span>
              <span>{tried}</span>
            </Cell>
          ))}
        </div>
      </div>
    </div>
  );
}

const ITMO_DOTS: [number, number, number][] = [
  [10, 6, 1.5], [20.5, 1, 1.5], [31, 6, 1.5], [51.5, 6, 1.5], [72, 6, 2.6], [82, 1, 1.5], [92.5, 6, 1.5],
  [20.5, 11.5, 3.8], [41, 11.5, 2.6], [61.5, 11.5, 3.8], [82, 11.5, 3.8],
  [31, 16.5, 3.8], [51.5, 16.5, 3.8], [72, 16.5, 3.8], [92.5, 16.5, 1.5],
  [0, 21.5, 1.5], [20.5, 21.5, 3.8], [41, 21.5, 3.8], [61.5, 21.5, 3.8], [82, 21.5, 2.6],
  [10, 27, 2.6], [31, 27, 3.8], [51.5, 27, 3.8], [72, 27, 2.6],
  [0, 32, 1.5], [20.5, 32, 1.5], [41, 32, 2.6], [61.5, 32, 2.6], [82, 32, 1.5],
  [31, 37, 2.6], [51.5, 37, 2.6], [72, 37, 1.5], [41, 42.5, 1.5],
];

function Footer() {
  return (
    <div className="flex flex-col items-center pt-[18px] text-[17.5px] leading-[21px]">
      <Fit className="w-[419px]">
        <span className="text-[#6b0a91] underline">Codeforces</span> (c) Copyright 2010-2020 Mike Mirzayanov
      </Fit>
      <Fit className="w-[383px]">The only programming contests Web 2.0 platform</Fit>
      <Fit className="w-[349px]">
        Server time: May/29/2020 10:21:19<sup className="top-[-7px] text-[10.500px] leading-none">UTC+5.5</sup> (i2).
      </Fit>
      <Fit className="w-[326px]">
        Desktop version, switch to <span className="text-[#4b00d0] underline">mobile version</span>.
      </Fit>
      <Fit className="w-[86px] text-[13.75px] leading-4 text-[#4b00d0]">
        <span className="underline">Privacy Policy</span>
      </Fit>
      <Fit className="mt-[30px] w-[104px]">Supported by</Fit>
      <div className="mt-[15px] flex w-[240px] items-start">
        <svg viewBox="0 0 75 75" className="size-[75px] shrink-0">
          <defs>
            <linearGradient id="tgA" x1="0" y1="0" x2="0" y2="1">
              <stop offset="0" stopColor="#2ca5e0" />
              <stop offset="1" stopColor="#0080cc" />
            </linearGradient>
          </defs>
          <circle cx="37.500" cy="37.500" r="37.500" fill="url(#tgA)" />
          <path d="M14.500 37.500L56 22Q57.500 22 57 24L50 57Q49 59 47 57L31 45L29 55Z" fill="#f3f7fb" />
          <path d="M25 42L51 27L31 46L29.500 56Q28 56 27.500 54Z" fill="#c5d7e8" />
        </svg>
        <div className="ml-10 flex shrink-0 flex-col items-center">
          <svg viewBox="-2 -1 97 46" className="-mt-px ml-[1px] h-[46px] w-[97px]">
            {ITMO_DOTS.map(([x, y, r], i) => (
              <circle key={i} cx={x} cy={y} r={r} fill="#3730a3" />
            ))}
            <circle cx="10" cy="16.500" r="3.800" fill="#f5083c" />
          </svg>
          <div className="mt-[10px] font-['Roboto',sans-serif] text-[21px] font-light leading-[21px] text-[#3730a3]">
            <Fit className="w-[150px]">ITMO UNIVERSITY</Fit>
          </div>
        </div>
      </div>
    </div>
  );
}

function Scrollbar() {
  return (
    <div className="flex w-[15px] shrink-0 flex-col items-center bg-[#f1f1f1]">
      <svg viewBox="0 0 8 4" className="mb-[5px] mt-1.5 h-1 w-2">
        <path d="M0 4H8L4 0Z" fill="#a3a3a3" />
      </svg>
      <span className="h-[876px] w-[11px] bg-[#c1c1c1]" />
      <svg viewBox="0 0 8 4" className="mb-1.5 mt-auto h-1 w-2">
        <path d="M0 0H8L4 4Z" fill="#505050" />
      </svg>
    </div>
  );
}

export default function App() {
  return (
    <div className="flex h-[1080px] w-[1920px] flex-col overflow-hidden bg-white">
      <TopBar />
      <div className="flex min-h-0 flex-1">
        <Dock />
        <div className="flex min-w-0 flex-1 flex-col">
          <div className="font-['Open_Sans',sans-serif] text-sm leading-5 text-[#45494d]">
            <TabStrip />
            <Toolbar />
            <Bookmarks />
          </div>
          <div className="flex min-h-0 flex-1">
            <div className="flex-1 overflow-hidden px-[169px] font-['Liberation_Sans',Arial,sans-serif] text-black">
              <div className="mx-[18px] w-[1465px]">
                <Header />
                <Nav />
                <SubNav />
                <div className="flex flex-col items-center pr-px">
                  <Fit className="w-[606px] text-[26.25px] leading-8 text-[#4a4a9f]">Educational Codeforces Round 88 (Rated for Div. 2)</Fit>
                  <Fit className="mt-[13px] w-[115px] text-[17.5px] leading-[21px]">System testing</Fit>
                </div>
                <div className="mt-[9px] flex justify-end pr-px text-[13.75px] leading-4 text-[#888]">
                  <Fit className="w-[405px]">Double click (or ctrl+click) each entry to view its submission history</Fit>
                </div>
                <Standings />
              </div>
              <div className="mt-14 h-px w-[1500px] bg-[#c8c8c8]" />
              <Footer />
            </div>
            <Scrollbar />
          </div>
        </div>
      </div>
    </div>
  );
}
